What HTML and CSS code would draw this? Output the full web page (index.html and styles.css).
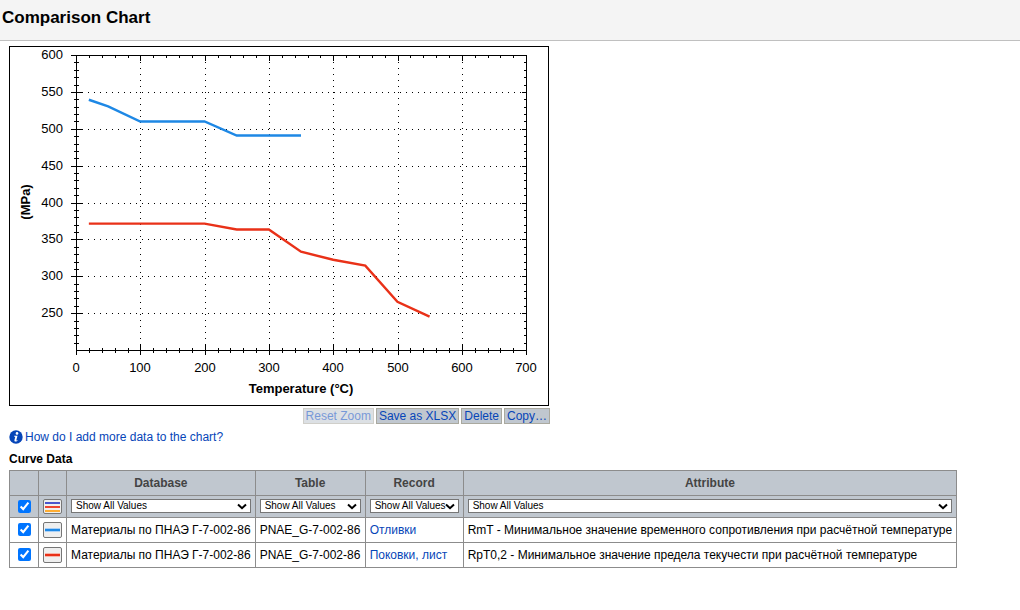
FILE: index.html
```
<!DOCTYPE html>
<html lang="en">
<head>
<meta charset="utf-8">
<title>Comparison Chart</title>
<link rel="stylesheet" href="styles.css">
</head>
<body>
<header class="page-header"><h1 class="page-title">Comparison Chart</h1></header>
<main class="content">
  <section class="chart-panel">
    <svg id="chart" class="chart" viewBox="0 0 540 360" role="img" aria-label="MPa against temperature">
      <g id="grid" class="grid"></g>
      <path id="ticks" class="ticks"></path>
      <rect class="ticks" x="67.5" y="9.5" width="450" height="295"></rect>
      <g id="labels" class="tick-labels"></g>
      <g id="curves" class="curves"></g>
      <text class="axis-title" x="292" y="347">Temperature (°C)</text>
      <text class="axis-title" transform="translate(21 156) rotate(-90)">(MPa)</text>
    </svg>
    <div class="toolbar">
      <button class="tool" type="button" disabled>Reset Zoom</button>
      <button class="tool" type="button">Save as XLSX</button>
      <button class="tool" type="button">Delete</button>
      <button class="tool" type="button">Copy…</button>
    </div>
  </section>
  <a class="help" href="#help">
    <svg class="help-icon" viewBox="0 0 14 14" aria-hidden="true">
      <circle cx="7" cy="7" r="6.7" fill="#0645b8"></circle>
      <circle cx="8" cy="3.4" r="1.3" fill="#fff"></circle>
      <path d="M5.2 5.8H8.5L7.3 10.2Q7.3 10.8 8.6 10.1L8.3 10.9Q5.1 12.3 5.4 10.2L6.3 6.7L5 6.5Z" fill="#fff"></path>
    </svg>
    <span>How do I add more data to the chart?</span>
  </a>
  <h2 class="section-title">Curve Data</h2>
  <table class="curve-table">
    <thead>
      <tr class="head-row"><th class="narrow"></th><th class="narrow"></th><th>Database</th><th class="source">Table</th><th class="record">Record</th><th>Attribute</th></tr>
      <tr class="filter-row">
        <td class="narrow"><input class="tick" type="checkbox" aria-label="Show all curves" checked></td>
        <td class="narrow"><button class="style-button" type="button" aria-label="Style of all curves"><svg class="style-icon" viewBox="0 0 15 12" aria-hidden="true"><path d="M0 2H15" stroke="#4a55cc" stroke-width="2"></path><path d="M0 6H15" stroke="#ee4530" stroke-width="2"></path><path d="M0 10H15" stroke="#ffad32" stroke-width="2"></path></svg></button></td>
        <td><select class="filter" aria-label="Database"><option>Show All Values</option></select></td>
        <td><select class="filter" aria-label="Table"><option>Show All Values</option></select></td>
        <td><select class="filter" aria-label="Record"><option>Show All Values</option></select></td>
        <td><select class="filter" aria-label="Attribute"><option>Show All Values</option></select></td>
      </tr>
    </thead>
    <tbody>
      <tr>
        <td class="narrow"><input class="tick" type="checkbox" aria-label="Show Отливки" checked></td>
        <td class="narrow"><button class="style-button" type="button" aria-label="Style of Отливки"><svg class="style-icon" viewBox="0 0 15 12" aria-hidden="true"><path d="M0 6H15" stroke="#a9d0f7" stroke-width="4"></path><path d="M0 6H15" stroke="#1e88e5" stroke-width="2"></path></svg></button></td>
        <td>Материалы по ПНАЭ Г-7-002-86</td><td>PNAE_G-7-002-86</td><td><a href="#castings">Отливки</a></td>
        <td>RmT - Минимальное значение временного сопротивления при расчётной температуре</td>
      </tr>
      <tr>
        <td class="narrow"><input class="tick" type="checkbox" aria-label="Show Поковки, лист" checked></td>
        <td class="narrow"><button class="style-button" type="button" aria-label="Style of Поковки, лист"><svg class="style-icon" viewBox="0 0 15 12" aria-hidden="true"><path d="M0 6H15" stroke="#f7b5aa" stroke-width="4"></path><path d="M0 6H15" stroke="#e93118" stroke-width="2"></path></svg></button></td>
        <td>Материалы по ПНАЭ Г-7-002-86</td><td>PNAE_G-7-002-86</td><td><a href="#forgings">Поковки, лист</a></td>
        <td>RpT0,2 - Минимальное значение предела текучести при расчётной температуре</td>
      </tr>
    </tbody>
  </table>
</main>
<script src="chart.js"></script>
</body>
</html>
```

FILE: chart.js
```
const NS = 'http://www.w3.org/2000/svg';
const LEFT = 67, RIGHT = 517, TOP = 9, BOTTOM = 304;
const xOf = t => LEFT + t * (RIGHT - LEFT) / 700;
const yOf = p => BOTTOM - (p - 200) * (BOTTOM - TOP) / 400;

function add(parent, tag, attrs, text) {
  const el = document.createElementNS(NS, tag);
  for (const name in attrs) el.setAttribute(name, attrs[name]);
  if (text !== undefined) el.textContent = text;
  document.getElementById(parent).appendChild(el);
}

let ticks = '';
for (let t = 0; t <= 700; t += 20) {
  const x = Math.round(xOf(t) + 0.2) + 0.5;
  const major = t % 100 === 0;
  ticks += `M${x} ${TOP}v${major ? 6 : 3}`;
  ticks += major ? `M${x} ${t % 700 ? 298 : 304}V309` : `M${x} 302V307`;
  if (major) {
    add('labels', 'text', { x: x - 0.5, y: 326, 'text-anchor': 'middle' }, t);
    if (t % 700) add('grid', 'path', { d: `M${x} 16V${BOTTOM}` });
  }
}
for (let p = 200; p <= 600; p += 10) {
  const y = Math.floor(yOf(p) + 0.6) + 0.5;
  const major = p % 50 === 0;
  if (p > 200) ticks += major ? `M${LEFT - 5} ${y}h${p < 600 ? 11 : 5}` : `M${LEFT - 2} ${y}h5`;
  ticks += `M${RIGHT + 1} ${y}h${major ? -5 : -3}`;
  if (major && p > 200) {
    add('labels', 'text', { x: 54, y: y + 3.5, 'text-anchor': 'end' }, p);
    if (p < 600) add('grid', 'path', { d: `M73 ${y}H${RIGHT}` });
  }
}
document.getElementById('ticks').setAttribute('d', ticks);

const series = [
  { color: '#1e88e5', points: [[20, 540], [50, 531], [100, 510.5], [200, 510.5], [250, 491.5], [350, 491.5]] },
  { color: '#e93118', points: [[20, 372], [200, 372], [250, 364], [300, 364], [350, 334], [400, 323], [450, 315], [500, 266], [550, 246]] }
];
for (const s of series) {
  add('curves', 'polyline', {
    points: s.points.map(([t, p]) => `${xOf(t)},${yOf(p) + 0.5}`).join(' '),
    stroke: s.color
  });
}
```

FILE: styles.css
```
body {
  margin: 0;
  background: #fff;
  color: #000;
  font: 12px/16px "Liberation Sans", Arial, sans-serif;
}
.page-header {
  padding: 8px 2px 12px;
  background: #f4f4f4;
  border-bottom: 1px solid #c0c0c0;
}
.page-title {
  margin: 0;
  font-size: 17px;
  line-height: 20px;
}
.content { padding: 5px 9px; }
.chart-panel { width: fit-content; }
.chart {
  display: block;
  width: 540px;
  outline: 1px solid #000;
  outline-offset: -1px;
}
.grid { stroke: #000; stroke-dasharray: 1 5; shape-rendering: crispEdges; }
.ticks { fill: none; stroke: #000; shape-rendering: crispEdges; }
.tick-labels { font-size: 13px; }
.curves { fill: none; stroke-width: 2.4; }
.axis-title { font-size: 13px; font-weight: bold; text-anchor: middle; }
.toolbar {
  display: flex;
  justify-content: flex-end;
  gap: 2px;
  margin-top: 2px;
  margin-right: -1px;
}
.tool {
  padding: 0 2px;
  border: 1px solid #aaa99f;
  background: #c0c7cf;
  color: #0645b8;
  font: 12px/14px "Liberation Sans", Arial, sans-serif;
}
.tool:disabled { opacity: 0.55; }
a { color: #0645b8; text-decoration: none; }
.help {
  display: flex;
  width: fit-content;
  align-items: center;
  gap: 2px;
  margin-top: 5px;
}
.help-icon { width: 14px; height: 14px; }
.section-title {
  margin: 6px 0 3px;
  font-size: 12px;
  line-height: 16px;
}
.curve-table { border-collapse: collapse; }
.curve-table th, .curve-table td {
  box-sizing: border-box;
  height: 25px;
  padding: 0 4px;
  border: 1px solid #8c8c8c;
  white-space: nowrap;
}
.curve-table th { color: #444; }
.curve-table .source { min-width: 110px; }
.curve-table .record { min-width: 98px; }
.curve-table .filter-row td { height: 22px; padding-bottom: 1px; }
.head-row, .filter-row { background: #c0c7cf; }
.curve-table .narrow { padding: 0 4px 1px; }
.tick {
  display: block;
  width: 13px;
  height: 13px;
  margin: 0 3px 0 4px;
  accent-color: #0075ff;
}
.style-button {
  display: block;
  width: 19px;
  height: 16px;
  padding: 1px;
  border: 1px solid #767676;
  border-radius: 2px;
  background: #efefef;
}
.filter-row .style-button { height: 15px; padding: 1px 1px 0; }
.style-icon { display: block; width: 15px; height: 12px; }
.filter {
  display: block;
  box-sizing: border-box;
  width: 0;
  min-width: 100%;
  height: 14px;
  padding: 0 12px 0 4px;
  border: 1px solid #767676;
  border-radius: 0;
  appearance: none;
  background: #fff url("data:image/svg+xml,%3Csvg xmlns='http://www.w3.org/2000/svg' width='10' height='7'%3E%3Cpath d='M1 1.5L5 5.2L9 1.5' fill='none' stroke='%23000' stroke-width='2'/%3E%3C/svg%3E") no-repeat right 3px center;
  color: #000;
  font: 10px/12px "Liberation Sans", Arial, sans-serif;
}
```
